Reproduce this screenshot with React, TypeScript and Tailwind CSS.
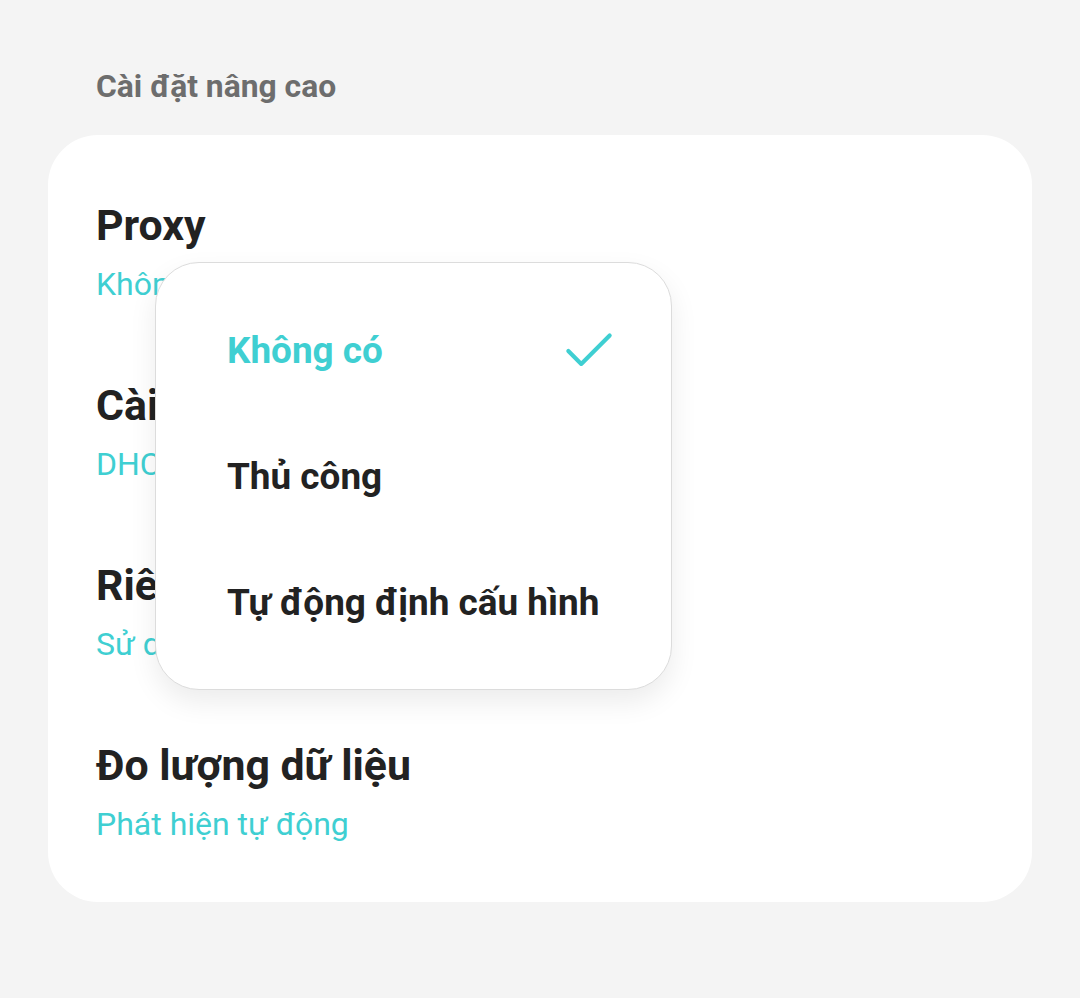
import { Check } from "lucide-react";

const rows = [
  { title: "Proxy", value: "Không có" },
  { title: "Cài đặt IP", value: "DHCP" },
  { title: "Riêng tư", value: "Sử dụng MAC ngẫu nhiên" },
  { title: "Đo lượng dữ liệu", value: "Phát hiện tự động" },
];

const options = ["Không có", "Thủ công", "Tự động định cấu hình"];

export default function App() {
  return (
    <div className="min-h-screen w-full bg-[#f4f4f4] px-12 pt-[66px] font-['Roboto',sans-serif]">
      {/* Section heading */}
      <h1 className="pl-12 text-[31.8px] leading-[40px] font-bold text-[#6d6d6d]">Cài đặt nâng cao</h1>

      {/* Settings card */}
      <div className="relative mt-[29px] rounded-[50px] bg-white pt-[66px] pb-[60px] px-12">
        <div className="flex flex-col gap-[79px]">
          {rows.map((row) => (
            <div key={row.title}>
              <div className="text-[42.8px] leading-[48px] font-bold text-[#222]">{row.title}</div>
              <div className="mt-[17px] text-[32px] leading-[36px] text-[#3fcfd2]">{row.value}</div>
            </div>
          ))}
        </div>

        {/* Proxy dropdown */}
        <div className="absolute left-[107px] top-[127px] w-[517px] rounded-[44px] border border-[#dcdcdc] bg-white pt-[25px] pb-[23px] shadow-[0_12px_28px_rgba(0,0,0,0.08)]">
          {options.map((opt, i) => (
            <div key={opt} className="flex h-[126px] items-center justify-between pl-[71px] pr-[51px]">
              <span className={`text-[36.9px] font-bold ${i === 0 ? "text-[#3fcfd2]" : "text-[#222]"}`}>{opt}</span>
              {i === 0 && <Check size={62} strokeWidth={1.6} className="text-[#3fcfd2]" />}
            </div>
          ))}
        </div>
      </div>
    </div>
  );
}
